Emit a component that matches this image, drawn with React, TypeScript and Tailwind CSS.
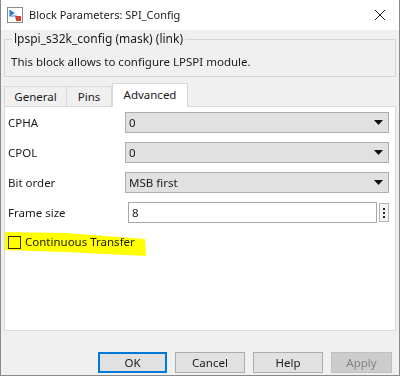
import React from "react";

const font = { fontFamily: '"Noto Sans", "Liberation Sans", sans-serif' };

function BlockIcon() {
  return (
    <svg width="16" height="16" viewBox="0 0 16 16">
      <rect x="0.5" y="0.5" width="15" height="15" fill="#fff" stroke="#8c8c8c" />
      <path d="M3 3 L3 9 L9 9 L9 12 L13 12" fill="none" stroke="#3a7bd5" strokeWidth="1.2" />
      <path d="M3 3 L8 6 L3 9 Z" fill="#3a7bd5" />
      <rect x="9" y="9" width="5" height="5" fill="#d6412b" />
    </svg>
  );
}

function Caret() {
  return (
    <svg width="9" height="5" viewBox="0 0 9 5">
      <path d="M0 0 L9 0 L4.5 5 Z" fill="#111" />
    </svg>
  );
}

function Dropdown({ value }: { value: string }) {
  return (
    <div className="flex h-[21px] w-[264px] items-center justify-between border border-[#adadad] bg-[#e1e1e1] pl-[3px] pr-[5px]">
      <span>{value}</span>
      <Caret />
    </div>
  );
}

function Row({ label, children }: { label: string; children: React.ReactNode }) {
  return (
    <div className="flex h-[21px] items-center">
      <span className="w-[117px] shrink-0">{label}</span>
      {children}
    </div>
  );
}

export default function App() {
  return (
    <div
      className="relative flex h-[376px] w-[400px] flex-col border-x border-b border-[#8a8a8a] bg-[#f0f0f0] text-[11.5px] leading-[16px] text-[#1b1b1b]"
      style={font}
    >
      {/* title bar */}
      <div className="flex h-[30px] shrink-0 items-center bg-white pl-[6px]">
        <BlockIcon />
        <span className="ml-[6px] text-[11px]">Block Parameters: SPI_Config</span>
        <svg className="ml-auto mr-[14px]" width="10" height="10" viewBox="0 0 10 10">
          <path d="M0 0 L10 10 M10 0 L0 10" stroke="#222" strokeWidth="1" />
        </svg>
      </div>

      <div className="flex flex-col px-[3px]">
        <fieldset className="mt-[1px] h-[46px] border border-[#d5d5d5] px-[6px]">
          <legend className="ml-[1px] px-[2px] text-[12px]">lpspi_s32k_config (mask) (link)</legend>
          <div className="mt-[7px]">This block allows to configure LPSPI module.</div>
        </fieldset>

        {/* tabs */}
        <div className="relative z-10 mt-[5px] flex h-[24px] items-end">
          <div className="flex h-[20px] w-[63px] items-center justify-center border border-b-0 border-[#d9d9d9] bg-[#f0f0f0]">
            General
          </div>
          <div className="flex h-[20px] w-[45px] items-center justify-center border-y border-r border-b-0 border-[#d9d9d9] bg-[#f0f0f0]">
            Pins
          </div>
          <div className="-mb-px flex h-[24px] w-[76px] items-center justify-center border border-b-0 border-[#d9d9d9] bg-white pb-[2px]">
            Advanced
          </div>
        </div>

        <div className="relative flex h-[225px] flex-col border border-[#d9d9d9] bg-white pl-[3px] pr-[6px] pt-[5px]">
          <div className="flex flex-col gap-[9px]">
            <Row label="CPHA">
              <Dropdown value="0" />
            </Row>
            <Row label="CPOL">
              <Dropdown value="0" />
            </Row>
            <Row label="Bit order">
              <Dropdown value="MSB first" />
            </Row>
            <Row label="Frame size">
              <div className="ml-[3px] flex h-[21px] w-[249px] items-center border border-[#a8a8a8] bg-white pl-[3px]">
                8
              </div>
              <div className="ml-[2px] flex h-[19px] w-[10px] flex-col items-center justify-center gap-[2px] border border-[#b4b4b4] bg-[#f4f4f4]">
                <span className="h-[2px] w-[2px] bg-[#222]" />
                <span className="h-[2px] w-[2px] bg-[#222]" />
                <span className="h-[2px] w-[2px] bg-[#222]" />
              </div>
            </Row>
          </div>

          <div className="relative mt-[11px] flex items-center">
            <svg
              className="pointer-events-none absolute left-[-3px] top-[-2px] mix-blend-multiply"
              width="150"
              height="26"
              viewBox="0 0 150 26"
            >
              <path d="M0 0 L60 1 L140 7 L141 24 L60 20 L0 18 Z" fill="#ffff00" />
            </svg>
            <span className="h-[13px] w-[13px] border border-[#333] bg-transparent" />
            <span className="ml-[4px]">Continuous Transfer</span>
          </div>
        </div>

        {/* buttons */}
        <div className="mt-[21px] flex gap-[8px] pl-[94px]">
          <div className="flex h-[21px] w-[69px] items-center justify-center border-2 border-[#0078d7] bg-[#e1e1e1]">
            OK
          </div>
          <div className="flex h-[21px] w-[70px] items-center justify-center border border-[#adadad] bg-[#e1e1e1]">
            Cancel
          </div>
          <div className="flex h-[21px] w-[70px] items-center justify-center border border-[#adadad] bg-[#e1e1e1]">
            Help
          </div>
          <div className="flex h-[21px] w-[61px] items-center justify-center border border-[#bfbfbf] bg-[#cccccc] text-[#838383]">
            Apply
          </div>
        </div>
      </div>
    </div>
  );
}
